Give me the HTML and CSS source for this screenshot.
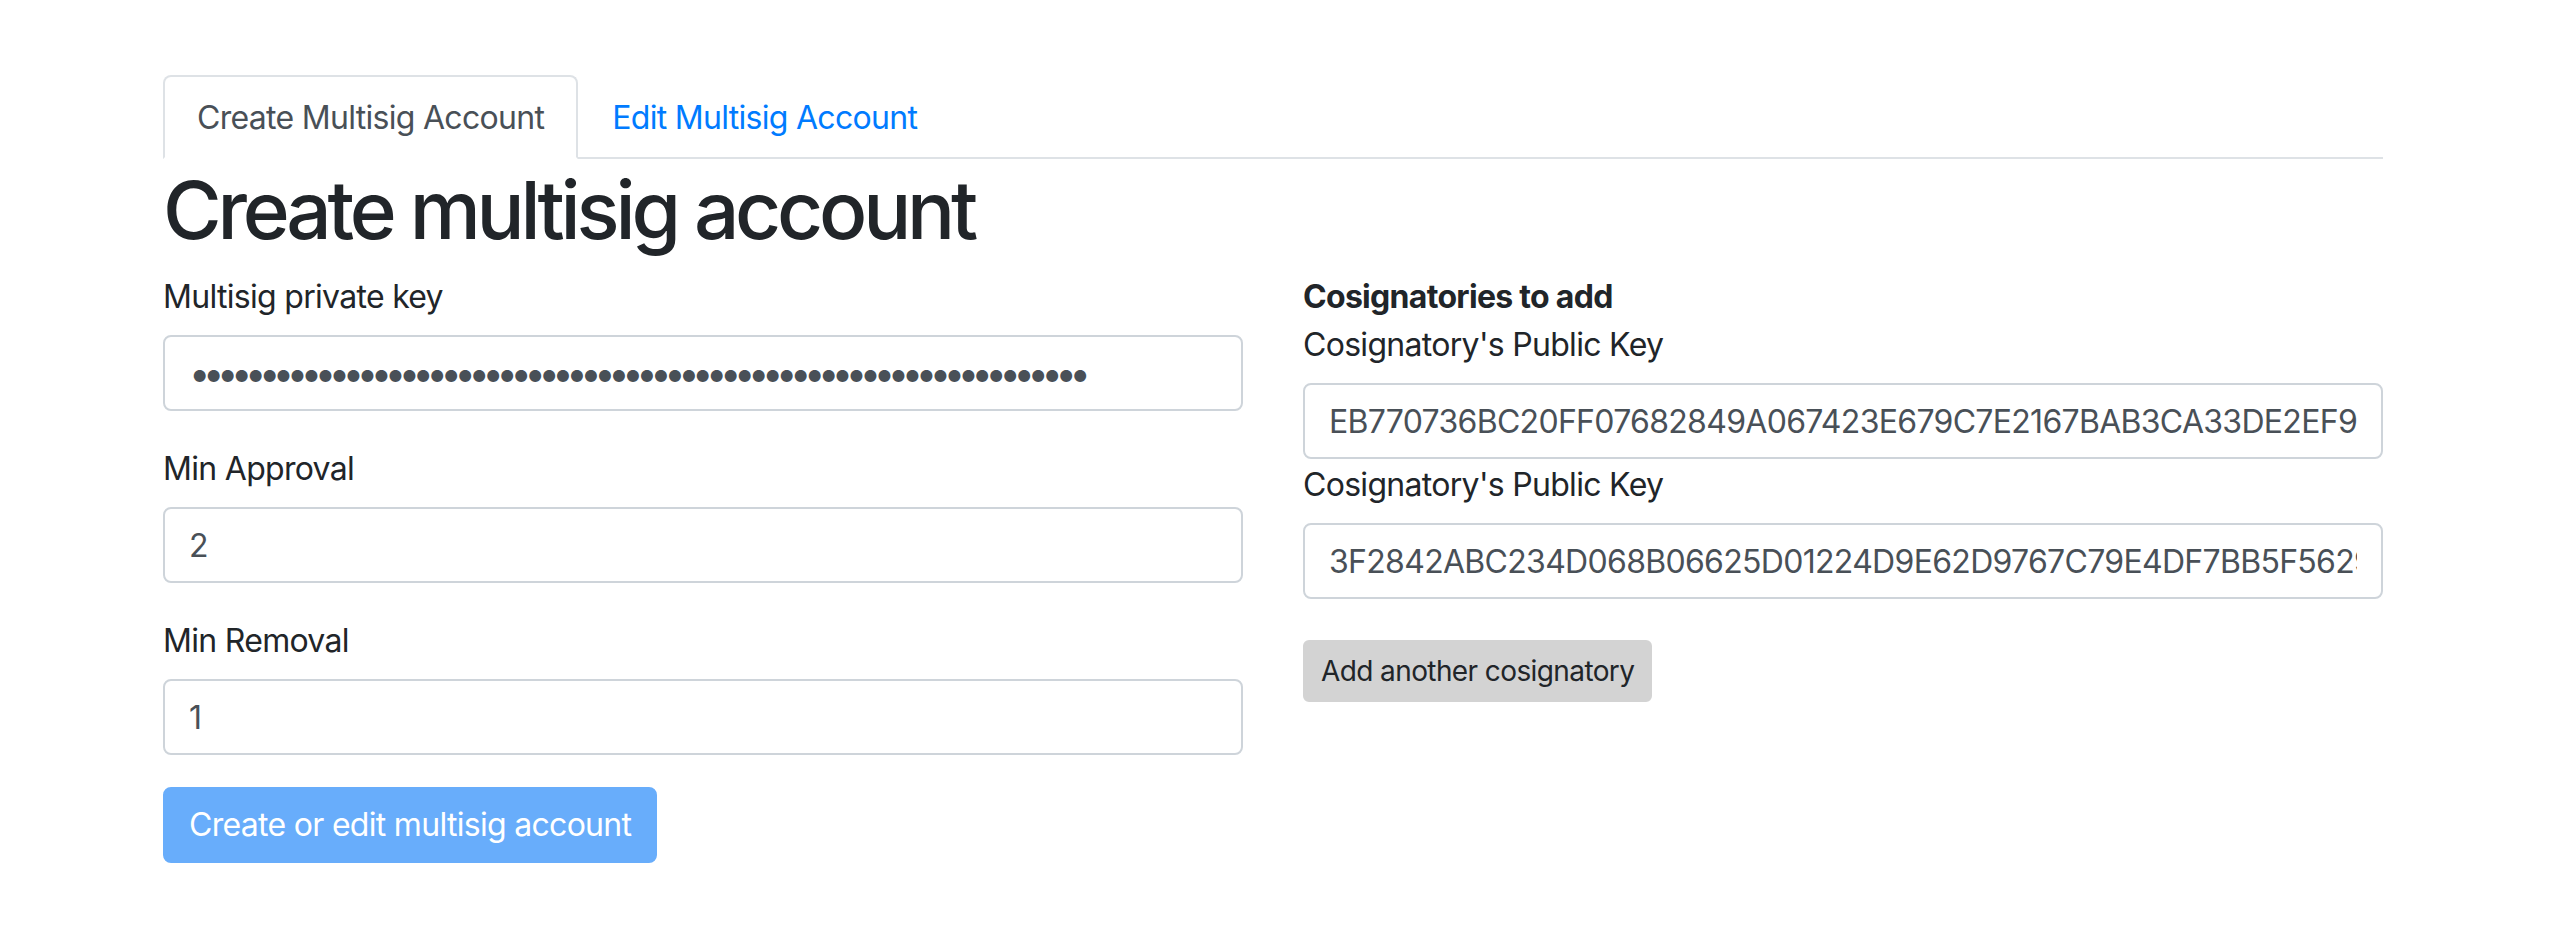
FILE: index.html
```html
<!DOCTYPE html>
<html lang="en">
<head>
<meta charset="utf-8">
<title>Create multisig account</title>
<link rel="stylesheet" href="styles.css">
</head>
<body>
<div class="container">
  <ul class="nav-tabs">
    <li class="nav-item"><a class="nav-link active" href="#">Create Multisig Account</a></li>
    <li class="nav-item"><a class="nav-link" href="#">Edit Multisig Account</a></li>
  </ul>
  <h1 class="title">Create multisig account</h1>
  <div class="row">
    <div class="col">
      <div class="form-group">
        <label class="label">Multisig private key</label>
        <input class="form-control dots" type="password" value="0123456789ABCDEF0123456789ABCDEF0123456789ABCDEF0123456789ABCDEF">
      </div>
      <div class="form-group">
        <label class="label">Min Approval</label>
        <input class="form-control" type="text" value="2">
      </div>
      <div class="form-group">
        <label class="label">Min Removal</label>
        <input class="form-control" type="text" value="1">
      </div>
      <button class="btn btn-primary" disabled>Create or edit multisig account</button>
    </div>
    <div class="col">
      <div class="section-title">Cosignatories to add</div>
      <div class="cosig">
        <label class="label">Cosignatory's Public Key</label>
        <input class="form-control" type="text" value="EB770736BC20FF07682849A067423E679C7E2167BAB3CA33DE2EF9A1C47B0D55">
      </div>
      <div class="cosig">
        <label class="label">Cosignatory's Public Key</label>
        <input class="form-control" type="text" value="3F2842ABC234D068B06625D01224D9E62D9767C79E4DF7BB5F5629D0C1E8A47B">
      </div>
      <button class="btn btn-sm btn-light">Add another cosignatory</button>
    </div>
  </div>
</div>
</body>
</html>
```
FILE: styles.css
```css
* { box-sizing: border-box; }
html, body { margin: 0; padding: 0; background: #fff; }
body {
  font-family: Inter, "Noto Sans", "Liberation Sans", sans-serif;
  font-size: 32px;
  line-height: 1.5;
  letter-spacing: -0.7px;
  color: #212529;
}
.container {
  width: 2220px;
  margin-left: 163px;
  padding-top: 75px;
}
.nav-tabs {
  display: flex;
  list-style: none;
  margin: 0;
  padding: 0;
  border-bottom: 2px solid #dee2e6;
}
.nav-item { margin-bottom: -2px; }
.nav-link {
  display: block;
  padding: 17px 32px 15px;
  border: 2px solid transparent;
  border-top-left-radius: 8px;
  border-top-right-radius: 8px;
  color: #007bff;
  text-decoration: none;
}
.nav-link.active {
  color: #495057;
  background: #fff;
  border-color: #dee2e6 #dee2e6 #fff;
}
.title {
  margin: 0 0 13px;
  padding-top: 3px;
  font-size: 80px;
  font-weight: 500;
  line-height: 1.2;
  letter-spacing: -4.2px;
}
.row {
  display: grid;
  grid-template-columns: 1fr 1fr;
  column-gap: 60px;
  align-items: start;
}
.col { display: flex; flex-direction: column; align-items: flex-start; }
.form-group { width: 100%; margin-bottom: 32px; }
.cosig { width: 100%; }
.label { display: block; padding-top: 2px; margin-bottom: 14px; }
.section-title { font-weight: 700; padding-top: 2px; margin-bottom: -2px; }
.form-control {
  display: block;
  width: 100%;
  height: 76px;
  padding: 12px 24px;
  font-family: inherit;
  font-size: 32px;
  line-height: 1.5;
  letter-spacing: -0.7px;
  color: #495057;
  background: #fff;
  border: 2px solid #ced4da;
  border-radius: 8px;
  outline: none;
}
.dots {
  font-size: 38px;
  line-height: 48px;
  letter-spacing: -7.4px;
}
.btn {
  display: inline-block;
  font-family: inherit;
  font-size: 32px;
  line-height: 1.5;
  letter-spacing: -0.7px;
  padding: 12px 24px;
  border: 2px solid transparent;
  border-radius: 8px;
  cursor: pointer;
}
.btn-primary {
  color: #fff;
  background: #68adfb;
  border-color: #68adfb;
}
.btn-sm {
  font-size: 28px;
  letter-spacing: -0.6px;
  padding: 8px 16px;
  border-radius: 6px;
}
.btn-light {
  margin-top: 41px;
  color: #212529;
  background: #d3d3d3;
  border-color: #d3d3d3;
}
```
